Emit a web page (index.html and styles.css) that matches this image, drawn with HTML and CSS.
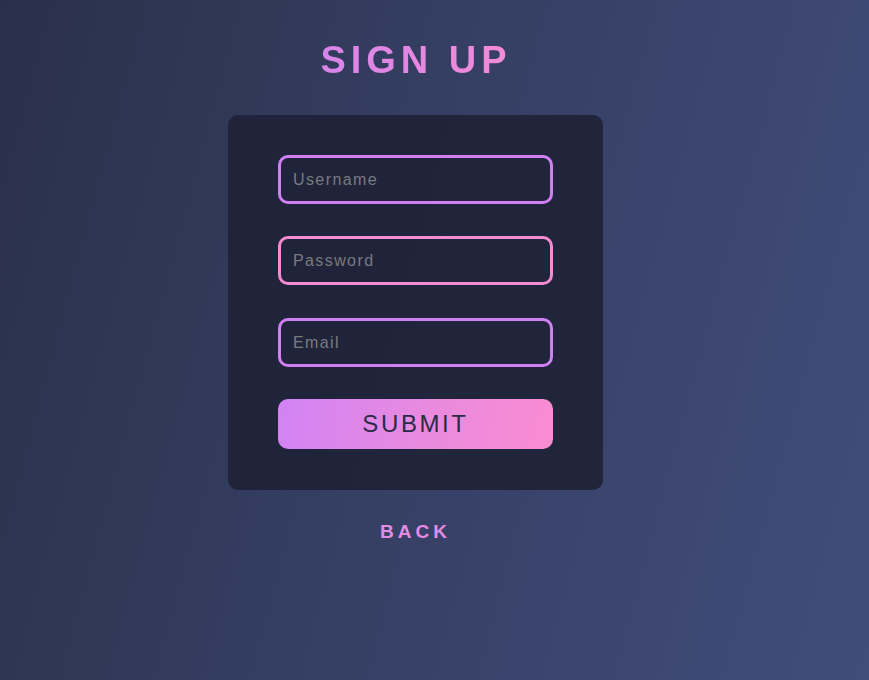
FILE: index.html
```html
<!DOCTYPE html>
<html lang="en">
<head>
<meta charset="utf-8">
<title>Sign Up</title>
<link rel="stylesheet" href="styles.css">
</head>
<body>
<main class="page">
  <h1 class="title">SIGN UP</h1>
  <form class="card">
    <input class="field field-purple" type="text" placeholder="Username">
    <input class="field field-pink" type="password" placeholder="Password">
    <input class="field field-purple field-email" type="email" placeholder="Email">
    <button class="submit" type="button">SUBMIT</button>
  </form>
  <a class="back" href="#">BACK</a>
</main>
</body>
</html>
```

FILE: styles.css
```css
* { box-sizing: border-box; }
html, body { margin: 0; height: 100%; }
body {
  background: linear-gradient(105deg, #2a3049 0%, #353f63 45%, #414c7b 100%);
  font-family: "Liberation Sans", Arial, sans-serif;
  overflow: hidden;
}
.page {
  display: flex;
  flex-direction: column;
  align-items: center;
  padding: 35px 38px 0 0;
}
.title {
  margin: 0;
  font-size: 38px;
  font-weight: 700;
  letter-spacing: 5px;
  line-height: 50px;
  background: linear-gradient(90deg, #d884ea, #f38bd8);
  -webkit-background-clip: text;
  background-clip: text;
  color: transparent;
  padding-left: 1px;
}
.card {
  margin-top: 30px;
  width: 375px;
  height: 375px;
  background: rgba(30, 33, 54, 0.88);
  border-radius: 10px;
  padding: 40px 50px;
  display: flex;
  flex-direction: column;
  gap: 32px;
}
.field {
  width: 275px;
  height: 49px;
  border-radius: 10px;
  border: 3px solid #d17ff5;
  background: transparent;
  padding: 0 12px;
  font-family: "Liberation Sans", Arial, sans-serif;
  font-size: 16px;
  letter-spacing: 1.4px;
  color: #ddd;
  outline: none;
}
.field-pink { border-color: #f58bd3; }
.field-email { margin-top: 1px; }
.field::placeholder { color: #7a7a7f; }
.submit {
  width: 275px;
  height: 50px;
  border: none;
  border-radius: 10px;
  background: linear-gradient(100deg, #d183f5 0%, #e98ade 55%, #fa8bd2 100%);
  color: #2a2c44;
  font-family: "Liberation Sans", Arial, sans-serif;
  font-size: 24px;
  letter-spacing: 2.6px;
  padding: 0;
}
.back {
  margin-top: 31px;
  font-size: 19px;
  font-weight: 700;
  letter-spacing: 4px;
  color: #e58be3;
  text-decoration: none;
  padding-left: 0;
}
```
